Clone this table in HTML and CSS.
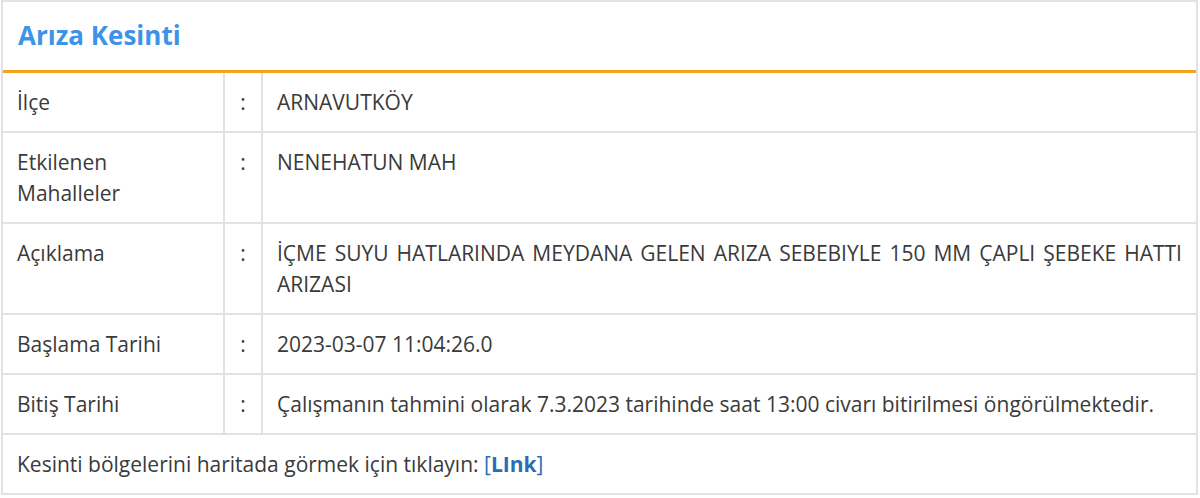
FILE: index.html
```html
<!DOCTYPE html>
<html lang="tr">
<head>
<meta charset="utf-8">
<link rel="stylesheet" href="styles.css">
</head>
<body>
<div class="panel">
  <div class="panel-head"><h2 class="title">Arıza Kesinti</h2></div>
  <table class="info">
    <tr><td class="lbl">İlçe</td><td class="sep">:</td><td class="val">ARNAVUTKÖY</td></tr>
    <tr><td class="lbl">Etkilenen Mahalleler</td><td class="sep">:</td><td class="val">NENEHATUN MAH</td></tr>
    <tr><td class="lbl">Açıklama</td><td class="sep">:</td><td class="val">İÇME SUYU HATLARINDA MEYDANA GELEN ARIZA SEBEBIYLE 150 MM ÇAPLI ŞEBEKE HATTI ARIZASI</td></tr>
    <tr><td class="lbl">Başlama Tarihi</td><td class="sep">:</td><td class="val">2023-03-07 11:04:26.0</td></tr>
    <tr><td class="lbl">Bitiş Tarihi</td><td class="sep">:</td><td class="val">Çalışmanın tahmini olarak 7.3.2023 tarihinde saat 13:00 civarı bitirilmesi öngörülmektedir.</td></tr>
    <tr><td class="foot" colspan="3">Kesinti bölgelerini haritada görmek için tıklayın: <span class="br">[</span><a class="link" href="#">LInk</a><span class="br">]</span></td></tr>
  </table>
</div>
</body>
</html>
```

FILE: styles.css
```css
html, body { margin: 0; padding: 0; background: #fff; }
body { font-family: "Open Sans", "Liberation Sans", sans-serif; color: #3a3a3a; }
.panel {
  margin: 0 0 0 1px;
  border: 2px solid #e2e2e2;
  box-sizing: border-box;
  width: 1197px;
}
.panel-head {
  box-sizing: border-box;
  display: flex;
  align-items: center;
  padding: 0 15px 3px;
  border-bottom: 3px solid #f5a31a;
  height: 71px;
}
.title {
  margin: 0;
  font-size: 26px;
  font-weight: 700;
  color: #3d93e8;
}
.info {
  width: 100%;
  border-collapse: collapse;
  font-size: 21px;
  line-height: 31px;
}
.info td {
  border: 2px solid #e2e2e2;
  padding: 14px 14px 13px;
  vertical-align: top;
}
.info tr:first-child td { border-top: none; }
.info tr td:first-child { border-left: none; }
.info tr td:last-child { border-right: none; }
.info tr:last-child td { border-bottom: none; }
.lbl { width: 192px; padding-left: 15px; }
.sep { width: 8px; text-align: center; }
.val { text-align: justify; }
.foot { padding-left: 15px; }
.link { color: #2b6db5; font-weight: 700; text-decoration: none; }
.br { color: #2b6db5; }
```
